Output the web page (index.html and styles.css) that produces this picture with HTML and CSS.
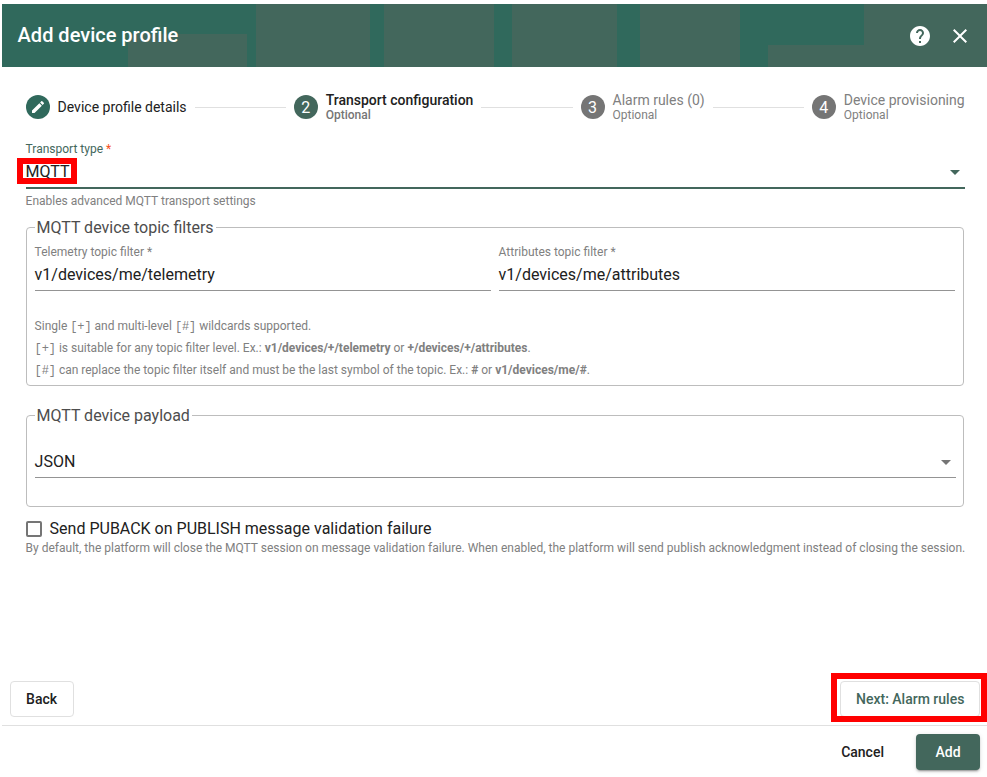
FILE: index.html
```html
<!DOCTYPE html>
<html lang="en">
<head>
<meta charset="utf-8">
<title>Add device profile</title>
<link rel="stylesheet" href="styles.css">
</head>
<body>
<main class="dialog">
  <header class="toolbar">
    <svg class="pattern" width="985" height="63" viewBox="0 0 985 63"><path d="M126 30h119v33H126zM254 0h114v63H254zM382 0h110v63H382zM510 0h105v63H510zM638 0h100v63H638zM862 0h123v63H766V41h96z"/></svg>
    <h1>Add device profile</h1>
    <div class="tools">
      <svg width="24" height="24" viewBox="0 0 24 24"><path d="M12 2C6.48 2 2 6.48 2 12s4.48 10 10 10 10-4.48 10-10S17.52 2 12 2zm1 17h-2v-2h2v2zm2.07-7.75-.9.92C13.45 12.9 13 13.5 13 15h-2v-.5c0-1.1.45-2.1 1.17-2.83l1.24-1.26c.37-.36.59-.86.59-1.41 0-1.1-.9-2-2-2s-2 .9-2 2H8c0-2.21 1.79-4 4-4s4 1.79 4 4c0 .88-.36 1.68-.93 2.25z"/></svg>
      <svg width="24" height="24" viewBox="0 0 24 24"><path d="M19 6.41 17.59 5 12 10.59 6.41 5 5 6.41 10.59 12 5 17.59 6.41 19 12 13.41 17.59 19 19 17.59 13.41 12z"/></svg>
    </div>
  </header>

  <nav class="stepper">
    <div class="step done"><span class="dot"><svg width="16" height="16" viewBox="0 0 24 24"><path d="M3 17.25V21h3.75L17.81 9.94l-3.75-3.75L3 17.25zM20.71 7.04a1 1 0 0 0 0-1.41l-2.34-2.34a1 1 0 0 0-1.41 0l-1.83 1.83 3.75 3.75 1.83-1.83z"/></svg></span><div class="name">Device profile details</div></div>
    <i class="line"></i>
    <div class="step active"><span class="dot">2</span><div class="name">Transport configuration<small>Optional</small></div></div>
    <i class="line"></i>
    <div class="step"><span class="dot">3</span><div class="name">Alarm rules (0)<small>Optional</small></div></div>
    <i class="line"></i>
    <div class="step"><span class="dot">4</span><div class="name">Device provisioning<small>Optional</small></div></div>
  </nav>

  <section class="content">
    <div class="field focused">
      <label>Transport type <b>*</b></label>
      <div class="value"><span class="marked">MQTT</span><i class="arrow"></i></div>
    </div>
    <p class="hint">Enables advanced MQTT transport settings</p>

    <fieldset class="filters">
      <legend>MQTT device topic filters</legend>
      <div class="row">
        <div class="field"><label>Telemetry topic filter *</label><div class="value">v1/devices/me/telemetry</div></div>
        <div class="field"><label>Attributes topic filter *</label><div class="value">v1/devices/me/attributes</div></div>
      </div>
      <div class="notes">
        <p>Single <code>[+]</code> and multi-level <code>[#]</code> wildcards supported.</p>
        <p><code>[+]</code> is suitable for any topic filter level. Ex.: <b>v1/devices/+/telemetry</b> or <b>+/devices/+/attributes</b>.</p>
        <p><code>[#]</code> can replace the topic filter itself and must be the last symbol of the topic. Ex.: <b>#</b> or <b>v1/devices/me/#</b>.</p>
      </div>
    </fieldset>

    <fieldset class="payload">
      <legend>MQTT device payload</legend>
      <div class="field"><div class="value">JSON<i class="arrow"></i></div></div>
    </fieldset>

    <div class="check"><i class="box"></i><span>Send PUBACK on PUBLISH message validation failure</span></div>
    <p class="hint wide">By default, the platform will close the MQTT session on message validation failure. When enabled, the platform will send publish acknowledgment instead of closing the session.</p>
  </section>

  <div class="wizard">
    <button class="outlined back">Back</button>
    <button class="outlined next">Next: Alarm rules</button>
  </div>
  <footer class="actions">
    <button class="plain">Cancel</button>
    <button class="filled">Add</button>
  </footer>
</main>
</body>
</html>
```
FILE: styles.css
```css
*, ::after { box-sizing: border-box; }
body { margin: 0; background: #fff; font-family: Roboto, sans-serif; color: #212121; overflow: hidden; }
h1, p { margin: 0; }
.dialog { width: 985px; height: 771px; margin: 4px 0 0 1.6px; display: flex; flex-direction: column; }
.toolbar { position: relative; height: 63px; flex: none; background: #30695c; color: #fff; display: flex; align-items: center; justify-content: space-between; padding: 0 14.4px 0 16px; }
.toolbar svg { display: block; fill: #fff; }
.toolbar .pattern { position: absolute; left: 0; top: 0; fill: #43675c; }
h1 { position: relative; font-size: 20px; font-weight: 500; line-height: 32px; padding-bottom: 2px; }
.tools { position: relative; display: flex; gap: 16px; }

.stepper { display: flex; align-items: center; height: 80px; flex: none; padding: 0 22px 0 24px; }
.step { display: flex; align-items: center; color: #808080; font-size: 14px; white-space: nowrap; }
.dot { width: 24px; height: 24px; border-radius: 50%; background: #757575; color: #fff; display: flex; align-items: center; justify-content: center; font-size: 16px; font-weight: 400; margin-right: 8px; }
.dot svg { fill: #fff; }
.name { line-height: 16px; }
.name small { display: block; font-size: 12px; line-height: 15px; }
.done { color: #212121; }
.done .dot { background: #30695c; }
.active .name { font-weight: 500; color: #212121; }
.active .name small { color: #757575; }
.active .dot { background: #43675c; }
.line { flex: 1; height: 1px; background: #e0e0e0; margin: 0 8px; }

.content { flex: 1; padding: 0 22px 0 24px; font-size: 16px; }
.field label { display: block; font-size: 12px; line-height: 16px; color: #808080; }
.field .value { display: flex; align-items: center; justify-content: space-between; height: 31px; padding-bottom: 1px; border-bottom: 1px solid #949494; line-height: 24px; }
.focused { margin-top: -6px; }
.focused label { color: #43675c; }
.focused label b { color: #f4511e; font-weight: 400; }
.focused .value { border-bottom: 2px solid #43675c; height: 32px; padding-bottom: 2px; }
.marked { border: 6px solid #f00; margin-left: -9px; padding-left: 3px; width: 60px; height: 26px; line-height: 15px; }
.arrow { border: 5px solid transparent; border-top-color: #757575; border-bottom: 0; margin: 2px 5px 0 0; }
.focused .arrow { border-top-color: #43675c; margin-top: 3px; }
.hint { font-size: 12px; line-height: 16px; color: #808080; white-space: nowrap; }
.focused + .hint { margin-top: 4px; }
fieldset { min-width: 0; margin: 0 1px 0 0; border: 1px solid #bdbdbd; border-radius: 4px; padding: 0 8px; }
legend { padding: 2px 2px 0; line-height: 20px; color: #4d4d4d; }
.filters { margin-top: 7px; height: 170px; }
.row { display: flex; gap: 8px; padding-top: 6px; }
.row .field { flex: 1; }
.notes { margin-top: 24px; font-size: 12px; line-height: 22px; color: #808080; }
.notes code { font: 12px/12px "Liberation Mono", monospace; letter-spacing: -.1px; }
.payload { margin-top: 18px; height: 103px; }
.payload .field { padding-top: 21px; margin-right: -1px; }
.check { display: flex; align-items: center; margin-top: 11px; height: 22px; }
.check span { padding-bottom: 2px; }
.box { width: 16px; height: 16px; border: 2px solid #757575; border-radius: 2px; margin-right: 8px; }

button { font: 500 14px/20px Roboto, sans-serif; height: 36px; border-radius: 4px; padding: 0 15px; border: 1px solid #e0e0e0; background: #fff; color: #212121; white-space: nowrap; }
.wizard { display: flex; justify-content: space-between; padding: 0 6.6px 8px 8px; border-bottom: 1px solid #e0e0e0; }
.back { width: 64px; }
.next { position: relative; width: 140px; color: #43675c; }
.next::after { content: ""; position: absolute; left: -10px; top: -9px; width: 156px; height: 49px; border: 6px solid #f00; }
.actions { display: flex; justify-content: flex-end; gap: 16px; padding: 8px 6.6px 5px; }
.plain { border-color: transparent; }
.filled { width: 64px; background: #43675c; border: 0; color: #fff; box-shadow: 0 3px 1px -2px rgba(0,0,0,.2), 0 2px 2px rgba(0,0,0,.14), 0 1px 5px rgba(0,0,0,.12); }
```
